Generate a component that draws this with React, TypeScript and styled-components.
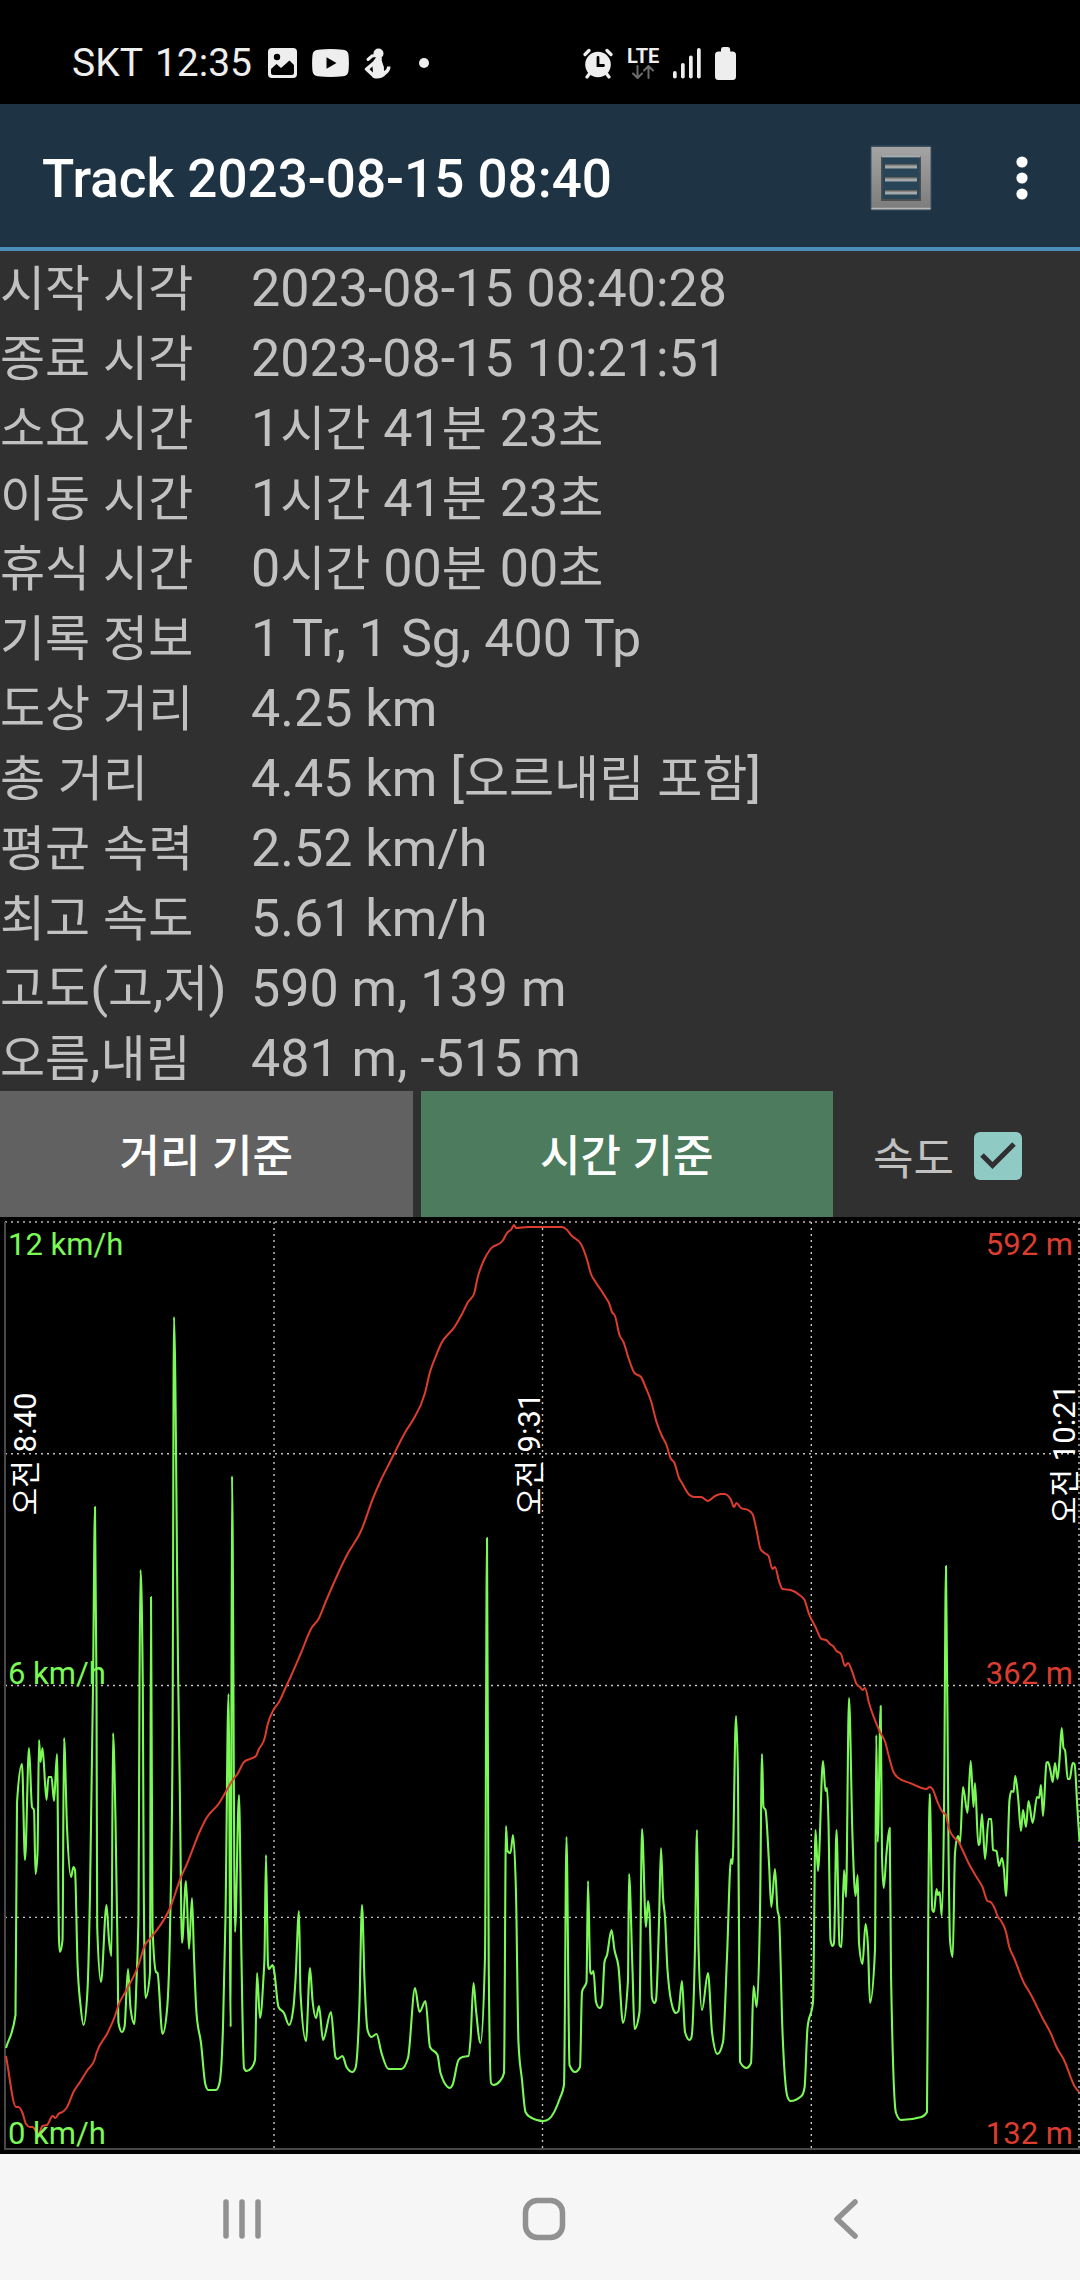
import React from "react";
import styled, { createGlobalStyle } from "styled-components";

const GlobalStyle = createGlobalStyle`
  *, *::before, *::after { box-sizing: border-box; }
  body {
    margin: 0;
    background: #303030;
    font-family: Roboto, "Noto Sans CJK KR", sans-serif;
  }
  h1, dl, dd, dt { margin: 0; font-weight: 400; }
  button { border: 0; padding: 0; font-family: inherit; cursor: pointer; }
  svg { display: block; }
`;

/* ---------- text with Latin and Hangul runs ---------- */

const HangulRun = styled.span<{ $size: number }>`
  font-family: "Noto Sans CJK KR", sans-serif;
  font-size: ${(p) => p.$size}px;
  line-height: 1;
`;

const TimeText = styled.text`
  fill: #fff;
  text-anchor: middle;
`;

const TimeRun = styled.tspan<{ $hangul: boolean }>`
  font-size: ${(p) => (p.$hangul ? 30 : 31)}px;
`;

const splitRuns = (text: string) => text.split(/([가-힣]+)/).filter(Boolean);
const isHangul = (run: string) => /[가-힣]/.test(run);

function Mixed({ text, size }: { text: string; size: number }) {
  return (
    <>
      {splitRuns(text).map((run, i) =>
        isHangul(run) ? (
          <HangulRun key={i} $size={size}>
            {run}
          </HangulRun>
        ) : (
          <React.Fragment key={i}>{run}</React.Fragment>
        )
      )}
    </>
  );
}

/* ---------- page parts ---------- */

const Page = styled.div`
  display: flex;
  flex-direction: column;
  min-height: 100vh;
  color: #c1c1c1;
`;

const StatusBar = styled.div`
  display: flex;
  align-items: center;
  height: 104px;
  padding: 22px 72px 0 72px;
  background: #000;
  color: #eee;
  font-size: 39px;
  line-height: 46px;
`;

const StatusGroup = styled.div<{ $gap: number; $before?: number }>`
  display: flex;
  align-items: center;
  gap: ${(p) => p.$gap}px;
  margin-left: ${(p) => p.$before ?? 0}px;
`;

const Network = styled.div`
  display: flex;
  flex-direction: column;
  align-items: center;
  font-size: 20px;
  font-weight: 700;
  line-height: 18px;
`;

const AppBar = styled.header`
  display: flex;
  align-items: center;
  height: 147px;
  padding: 4px 42px 0 42px;
  background: #1e3343;
  border-bottom: 4px solid #4a8fb9;
`;

const Title = styled.h1`
  flex: 1;
  padding-top: 3px;
  color: #fff;
  font-size: 53px;
  font-weight: 500;
  line-height: 62px;
`;

const Actions = styled.div`
  display: flex;
  gap: 55px;
`;

const IconButton = styled.button<{ $width: number }>`
  display: flex;
  align-items: center;
  justify-content: center;
  width: ${(p) => p.$width}px;
  height: 96px;
  background: transparent;
`;

const Stats = styled.dl`
  font-size: 52px;
`;

const StatRow = styled.div`
  display: flex;
  height: 70px;
  padding-top: 6px;
  line-height: 64px;
  white-space: nowrap;
`;

const StatName = styled.dt`
  flex: 0 0 251px;
`;

const StatValue = styled.dd`
  flex: 1;
`;

const Controls = styled.div`
  display: grid;
  grid-template-columns: 1fr 1fr 239px;
  gap: 8px;
  height: 126px;
`;

const ModeButton = styled.button<{ $active?: boolean }>`
  padding-top: 3px;
  background: ${(p) => (p.$active ? "#4c7b5d" : "#616161")};
  color: #fff;
  font-size: 47px;
  font-weight: 500;
`;

const SpeedToggle = styled.label`
  display: flex;
  align-items: center;
  gap: 20px;
  padding: 3px 0 0 32px;
  font-size: 47px;
  white-space: nowrap;
`;

const CheckStack = styled.span`
  display: grid;
  width: 48px;
  height: 48px;
  > * { grid-area: 1 / 1; }
  svg { pointer-events: none; }
`;

const CheckInput = styled.input`
  appearance: none;
  width: 48px;
  height: 48px;
  margin: 0;
  border: 5px solid #c1c1c1;
  border-radius: 6px;
  &:checked { border: 0; background: #90cac4; }
  & + svg { visibility: hidden; }
  &:checked + svg { visibility: visible; }
`;

const ChartPanel = styled.main`
  background: #000;
  svg { width: 100%; height: auto; }
  text { font-family: Roboto, "Noto Sans CJK KR", sans-serif; font-size: 31px; }
`;

const NavBar = styled.nav`
  display: flex;
  flex: 1;
  min-height: 126px;
  padding: 4px 83px 0 91px;
  background: #f6f6f6;
`;

const NavButton = styled.button`
  display: flex;
  flex: 1;
  align-items: center;
  justify-content: center;
  background: transparent;
`;

/* ---------- data ---------- */

const stats: [string, string][] = [
  ["시작 시각", "2023-08-15 08:40:28"],
  ["종료 시각", "2023-08-15 10:21:51"],
  ["소요 시간", "1시간 41분 23초"],
  ["이동 시간", "1시간 41분 23초"],
  ["휴식 시간", "0시간 00분 00초"],
  ["기록 정보", "1 Tr, 1 Sg, 400 Tp"],
  ["도상 거리", "4.25 km"],
  ["총 거리", "4.45 km [오르내림 포함]"],
  ["평균 속력", "2.52 km/h"],
  ["최고 속도", "5.61 km/h"],
  ["고도(고,저)", "590 m, 139 m"],
  ["오름,내림", "481 m, -515 m"],
];

const speedTrack = `6,831 15.5,798 17,586 22,547 25,643 29,531 32,590 34,593 35.5,657 37.5,636 39,523 40.5,545 42.5,531
46.5,583 48.5,560 51.5,560 54,584 57,537 59,723 60,735 62.5,723 64,521 67,610 71,660 73.5,650 75,653 77.5,746 80.5,788
83.5,808 87.5,773 90,676 93,470 95,290 96.5,470 97.2,710 101,765 106.5,688 109,723 111.5,739 113,516 115.5,603 117.5,730
118.5,806 122,815 124.5,810 128,752 130.5,791 134.5,807 136.5,763 138.5,696 139.5,470 140.5,353 142.8,470 143.7,663
145.5,781 150,756 151,380 152.5,710 156,755 157.5,756 162.5,817 167,793 170,713 172.5,530 174,100 178.3,470 179.7,563
182,726 186,664 189,732 192,681 194,740 196.5,796 201,826 205.5,868 208.5,873 216,873 219.5,866 223,810 225.5,700
228.5,477 230.7,810 232,259 235,715 239,578 241.5,743 244,851 246.5,854 251.5,851 255,843 257,756 260,801 263.5,760
264.5,740 266,638 268,748 269,752 272.5,748 274,753 278.5,790 284,796 289,808 293.5,790 295.5,763 299,694 300.5,776
306,824 310,751 312.5,783 316,801 319,789 323,823 331,795 335.5,840 337.5,842 342.5,839 346.5,850 352.5,855 355.5,851
359.5,786 362,688 364.5,763 367.5,813 371.5,820 376.5,817 381.5,836 388.5,852 395,852 401.5,852 408,841 415,771
419.5,795 425.5,784 430,830 437.5,838 440.5,856 450,871 452.5,868 458.5,843 462.5,840 468.5,839 470.5,823 473.5,766
476,793 480.5,826 485,740 487,321 488.7,746 491,866 493.5,868 500,864 504,856 506,609 507.5,634 510.5,636 513,618
516,676 518.5,826 522,863 525.5,895 530,900 543.5,904 549,902 560,881 564,868 566.5,620 569.5,848 575,855 580,850
582,775 586.5,765 588,664 590.3,755 591.3,757 593.5,754 596,785 599.5,791 602,788 604.5,745 607,738 611.5,713
614.5,733 618.5,750 623,806 628,763 629,657 632.5,753 634.5,812 639.5,795 642,612 646,710 648,684 649.5,696 652,781
654.5,786 656,783 659,706 661,631 663,680 665,700 667.5,753 673.5,793 676,796 678.5,794 682,764 685,815 689.5,823
691.5,820 695,730 697,613 698.5,730 702,793 708,756 712,815 717.5,837 723,825 727,740 731,642 732.5,647 736,499
738,563 740,845 746.5,851 751,846 753.5,769 756.7,790 760,696 762,537 763.5,590 765.5,593 769,646 771.3,690 775,652
777.5,693 779,700 782.5,815 787.5,880 790.5,884 801.5,879 804.5,871 807.5,811 813,785 815.5,613 818,654 823,544
825.5,574 827,571 828.5,606 830.5,723 832.5,729 834,726 836.5,613 839.5,728 841.5,730 844,653 846,680 849,481
852.5,620 855.5,679 857.7,658 859,726 862.5,747 865.5,707 868,730 870,786 875,733 876.3,518 877.7,625 880.7,489
882,640 883.7,671 886.5,636 889.7,611 891,756 896,896 901,903 921.5,900 927,895 928.3,696 929.7,577 932.3,693
934,695 936.5,672 938,678 939.7,675 941.7,699 944,596 946,349 948.5,630 950,723 952.7,740 955,636 958,619 960,626
963,570 967.5,596 970.7,544 973.5,590 975,566 978.3,628 979.5,627 982,597 985,642 988.7,602 991.3,602 993,633
996.5,634 999,649 1002,641 1004,653 1006,679 1009.5,583 1011.5,574 1013.5,575 1015.3,559 1018.3,583 1021,614
1023,593 1026,610 1028.5,584 1032.7,606 1037,580 1039,581 1041,568 1043,599 1046.5,546 1048,545 1050.5,554
1052.7,565 1055,546 1057.5,562 1059.7,540 1061.7,511 1063.5,531 1065,533 1067.7,562 1069.7,562 1072.7,546
1074.5,547 1077.5,593 1079.5,624`;

const altitudeTrack = `6,839 16,890 18.5,890 22.5,896 26,907 30,910 32.5,910 38.5,917 42.5,909 47,908 52.5,899 55.5,901 58.5,897
62.5,895 66.5,891 74,874 80,865 87.5,853 94.5,843 96.5,836 107.5,816 115,799 118.5,788 126.5,773 138.5,748 144.5,729
151.5,720 170.5,690 181,660 186.5,648 200,614 206.5,601 218.5,587 233.5,562 237.5,557 244,545 256,539 258.5,533 265,520
267.5,508 274,492 279,485 285,472 291.5,458 301,436 311.5,411 318.5,402 326,384 347.5,337 361,314 373.5,280 380,265
390,245 394,237 406.5,213 413,203 425,176 430,155 435.5,140 441.5,126 454.5,110 462,97 468,85 474,77 477.5,61 483.5,44
490.5,32 502.5,24 507,16 511.5,12 514,8 516,11 528,10 562,10 566,12 572,19 581,27 586.5,41 591,57 595.5,65 601,73
606,81 609,86 612,95 615,99 619.5,118 623.5,125 628.5,141 634.5,156 641,160 645.5,170 651,184 656.5,205 661.5,218
666.5,228 670.5,241 674.5,246 679,261 682,266 689.5,278 694.5,280 701,280 708,284 715,279 721,277 724.5,277 731,283
734,290 736.5,286 741,291 748,293 752.5,297 756.5,313 760.5,332 764.5,336 768.5,339 772.5,352 775,350 779,364 782.5,372
790.5,373 799.5,378 804.5,383 809,397 815.5,410 821.5,422 826,423 830,427 833,429 836.5,434 841,437 845,449 848,446
852,454 856.5,467 860,470 862.5,473 865,471 869,486 880,515 885.5,526 888.5,538 893.5,555 898.5,561 910,566 926.5,572
929.5,570 932.5,572 937.5,585 943.5,596 945.5,597 948.5,610 955.5,622 958,624 962.5,633 968.5,646 976.5,660 982.5,670
987.5,684 990.5,685 994.5,691 998,700 1000.5,703 1006,715 1009,729 1014.5,742 1024,766 1030,776 1042.5,801 1051.5,818
1056,829 1064,843 1075,870 1079,875`;

/* Monotone cubic path: keeps peaks at their samples and rounds flat runs. */
function monotonePath(track: string): string {
  const pts = track.trim().split(/\s+/).map((p) => p.split(",").map(Number));
  const n = pts.length;
  const slope = (i: number) => (pts[i + 1][1] - pts[i][1]) / (pts[i + 1][0] - pts[i][0]);
  const tangent = (i: number) => {
    if (i === 0) return slope(0);
    if (i === n - 1) return slope(n - 2);
    const a = slope(i - 1);
    const b = slope(i);
    if (a * b <= 0) return 0;
    const ha = pts[i][0] - pts[i - 1][0];
    const hb = pts[i + 1][0] - pts[i][0];
    const mean = (a * hb + b * ha) / (ha + hb);
    return Math.sign(mean) * Math.min(Math.abs(a), Math.abs(b), Math.abs(mean) / 2) * 2;
  };
  let d = `M${pts[0][0]} ${pts[0][1]}`;
  for (let i = 0; i < n - 1; i++) {
    const [x0, y0] = pts[i];
    const [x1, y1] = pts[i + 1];
    const h = (x1 - x0) / 3;
    d += `C${(x0 + h).toFixed(2)} ${(y0 + tangent(i) * h).toFixed(2)} ${(x1 - h).toFixed(2)} ${(y1 - tangent(i + 1) * h).toFixed(2)} ${x1} ${y1}`;
  }
  return d;
}

function TimeLabel({ x, text }: { x: number; text: string }) {
  return (
    <TimeText transform={`translate(${x} 237) rotate(-90)`}>
      {splitRuns(text).map((run, i) => (
        <TimeRun key={i} $hangul={isHangul(run)}>
          {run}
        </TimeRun>
      ))}
    </TimeText>
  );
}

function TrackChart({ showSpeed }: { showSpeed: boolean }) {
  const green = "#7bf956";
  const red = "#dc3d2e";
  return (
    <svg viewBox="0 0 1080 937" role="img" aria-label="속도와 고도">
      <g fill="none" strokeDasharray="2 4">
        <path d="M5 5H1080" stroke="#8a8a8a" strokeWidth="2" />
        <path d="M5 236.7H1080M5 468.5H1080M5 700.4H1080" stroke="#c4c4c4" strokeWidth="1.4" />
        <path d="M274 5V931M542.5 5V931M811.3 5V931" stroke="#c4c4c4" strokeWidth="1.4" />
        <path d="M1079 5V931" stroke="#8a8a8a" strokeWidth="2" />
      </g>
      <path d="M5 5V932H1080" fill="none" stroke="#484848" strokeWidth="2" />
      {showSpeed && (
        <path d={monotonePath(speedTrack)} fill="none" stroke={green} strokeWidth="2.1" strokeLinejoin="round" />
      )}
      <path d={monotonePath(altitudeTrack)} fill="none" stroke={red} strokeWidth="2" strokeLinejoin="round" />
      <g fill={green}>
        <text x="8" y="38">12 km/h</text>
        <text x="8" y="467">6 km/h</text>
        <text x="8" y="927">0 km/h</text>
      </g>
      <g fill={red} textAnchor="end">
        <text x="1073" y="38">592 m</text>
        <text x="1073" y="467">362 m</text>
        <text x="1073" y="927">132 m</text>
      </g>
      <TimeLabel x={36} text="오전 8:40" />
      <TimeLabel x={540} text="오전 9:31" />
      <TimeLabel x={1075} text="오전 10:21" />
    </svg>
  );
}

/* ---------- icons ---------- */

const PhotoIcon = () => (
  <svg width="29" height="30" viewBox="0 0 29 30">
    <rect width="29" height="30" rx="4" fill="#eee" />
    <circle cx="9" cy="9" r="3.2" fill="#000" />
    <path d="M3 21 8.500 16 13 20 21.500 12.500 26 17V24.500Q26 27 23.500 27H5.500Q3 27 3 24.500Z" fill="#000" />
  </svg>
);

const VideoIcon = () => (
  <svg width="37" height="28" viewBox="0 0 37 28">
    <path d="M6 .8Q18.500-.6 31 .8 36 1.200 36.500 6 37.300 14 36.500 22 36 26.800 31 27.200 18.500 28.600 6 27.200 1 26.800.5 22-.3 14 .5 6 1 1.200 6 .8Z" fill="#eee" />
    <path d="M14.500 8.200V19.800L24.500 14Z" fill="#000" />
  </svg>
);

const FigureIcon = () => (
  <svg width="27" height="31" viewBox="0 0 27 31">
    <circle cx="14.500" cy="5.500" r="5" fill="#eee" />
    <path d="M12 9.500H18Q17 12 18.500 15 20.500 19 20 23 23 21.500 23 18.500H26.500Q26.500 23 22 26.500 18.500 30.500 13 30.500 9 30.500 8 28.500L1 22Q.3 21 1 20.200L9 13.500Z" fill="#eee" />
    <path d="M4 11.500 8 8 12 7.500" fill="none" stroke="#eee" strokeWidth="3" strokeLinecap="round" />
    <path d="M5.500 21.300 8.500 18.500 9 24.500Z" fill="#000" />
  </svg>
);

const DotIcon = () => (
  <svg width="10" height="10" viewBox="0 0 10 10">
    <circle cx="5" cy="5" r="5" fill="#eee" />
  </svg>
);

const AlarmIcon = () => (
  <svg width="30" height="31" viewBox="0 0 30 31">
    <g stroke="#eee" strokeWidth="3.200" strokeLinecap="round">
      <path d="M2 6.500 6 2.500M28 6.500 24 2.500M7 25 4 29M23 25 26 29" />
    </g>
    <circle cx="15" cy="16.500" r="12.800" fill="#eee" />
    <path d="M15 9.500V17.500H20.500" fill="none" stroke="#000" strokeWidth="2.800" strokeLinecap="round" />
  </svg>
);

const DataArrows = () => (
  <svg width="22" height="14" viewBox="0 0 22 14" fill="none" stroke="#6c6c6c" strokeWidth="2" strokeLinecap="round" strokeLinejoin="round">
    <path d="M5.500 1V13M1 8.500 5.500 13 10 8.500M16.500 13V1M12 5.500 16.500 1 21 5.500" />
  </svg>
);

const SignalIcon = () => (
  <svg width="28" height="31" viewBox="0 0 28 31" fill="#eee">
    <rect x="0" y="23" width="3.700" height="7.500" rx="1.800" />
    <rect x="8" y="15" width="3.700" height="15.500" rx="1.800" />
    <rect x="16" y="7.500" width="3.700" height="23" rx="1.800" />
    <rect x="24" y="0" width="3.700" height="30.500" rx="1.800" />
  </svg>
);

const BatteryIcon = () => (
  <svg width="21" height="33" viewBox="0 0 21 33" fill="#eee">
    <path d="M6 2.500Q6 0 8 0H13Q15.200 0 15.200 2.500V4.500H17.500Q21 4.500 21 8V29.500Q21 33 17.500 33H3.500Q0 33 0 29.500V8Q0 4.500 3.500 4.500H6Z" />
  </svg>
);

const ListIcon = () => (
  <svg width="62" height="66" viewBox="0 0 62 66">
    <defs>
      <linearGradient id="frame" x1="0" y1="0" x2="0" y2="1">
        <stop offset="0" stopColor="#a4a4a4" />
        <stop offset="1" stopColor="#7c7c7c" />
      </linearGradient>
    </defs>
    <rect x="0.500" y="0.500" width="61" height="65" rx="2" fill="#3b5263" />
    <rect x="1.500" y="2" width="59" height="62.500" fill="url(#frame)" />
    <path d="M1.500 63.500H60.500" stroke="#b8b8b8" strokeWidth="1.500" />
    <rect x="11" y="11" width="40" height="45" fill="#4b4f52" />
    <rect x="12.500" y="13" width="37" height="41" fill="#284457" />
    <path d="M11.500 11.500H50.500" stroke="#9fb0b8" strokeWidth="1.500" />
    <path d="M15 20H47M15 33H47M15 46H47" stroke="#66625f" strokeWidth="2" />
    <path d="M15 22H47M15 35H47M15 48H47" stroke="#a3a8aa" strokeWidth="3" />
  </svg>
);

const MoreIcon = () => (
  <svg width="12" height="44" viewBox="0 0 12 44" fill="#fff">
    <circle cx="6" cy="6" r="5.600" />
    <circle cx="6" cy="22" r="5.600" />
    <circle cx="6" cy="38" r="5.600" />
  </svg>
);

const CheckMark = () => (
  <svg width="48" height="48" viewBox="0 0 48 48" fill="none" stroke="#303030" strokeWidth="5">
    <path d="M8 23 18.500 33.500 40 12" />
  </svg>
);

const NavIcon = ({ children }: { children: React.ReactNode }) => (
  <svg width="44" height="44" viewBox="0 0 44 44" fill="none" stroke="#919191" strokeWidth="5.500" strokeLinecap="round" strokeLinejoin="round">
    {children}
  </svg>
);

/* ---------- app ---------- */

export default function App() {
  const [mode, setMode] = React.useState<"distance" | "time">("time");
  const [showSpeed, setShowSpeed] = React.useState(true);

  return (
    <Page>
      <GlobalStyle />
      <StatusBar>
        <StatusGroup $gap={12}>
          <span>SKT</span>
          <span>12:35</span>
        </StatusGroup>
        <StatusGroup $gap={15} $before={16}>
          <PhotoIcon />
          <VideoIcon />
          <FigureIcon />
        </StatusGroup>
        <StatusGroup $gap={0} $before={28}>
          <DotIcon />
        </StatusGroup>
        <StatusGroup $gap={14} $before={154}>
          <AlarmIcon />
          <Network>
            LTE
            <DataArrows />
          </Network>
          <SignalIcon />
          <BatteryIcon />
        </StatusGroup>
      </StatusBar>

      <AppBar>
        <Title>Track 2023-08-15 08:40</Title>
        <Actions>
          <IconButton $width={100} aria-label="목록">
            <ListIcon />
          </IconButton>
          <IconButton $width={32} aria-label="더보기">
            <MoreIcon />
          </IconButton>
        </Actions>
      </AppBar>

      <Stats>
        {stats.map(([name, value]) => (
          <StatRow key={name}>
            <StatName>
              <Mixed text={name} size={49} />
            </StatName>
            <StatValue>
              <Mixed text={value} size={49} />
            </StatValue>
          </StatRow>
        ))}
      </Stats>

      <Controls>
        <ModeButton $active={mode === "distance"} onClick={() => setMode("distance")}>
          <Mixed text="거리 기준" size={44} />
        </ModeButton>
        <ModeButton $active={mode === "time"} onClick={() => setMode("time")}>
          <Mixed text="시간 기준" size={44} />
        </ModeButton>
        <SpeedToggle>
          <Mixed text="속도" size={44} />
          <CheckStack>
            <CheckInput type="checkbox" checked={showSpeed} onChange={(e) => setShowSpeed(e.target.checked)} />
            <CheckMark />
          </CheckStack>
        </SpeedToggle>
      </Controls>

      <ChartPanel>
        <TrackChart showSpeed={showSpeed} />
      </ChartPanel>

      <NavBar>
        <NavButton aria-label="최근 앱">
          <NavIcon>
            <path d="M6 5V39M22 5V39M38 5V39" />
          </NavIcon>
        </NavButton>
        <NavButton aria-label="홈">
          <NavIcon>
            <rect x="3.500" y="3.500" width="37" height="37" rx="12" />
          </NavIcon>
        </NavButton>
        <NavButton aria-label="뒤로">
          <NavIcon>
            <path d="M31 5 13 22 31 39" />
          </NavIcon>
        </NavButton>
      </NavBar>
    </Page>
  );
}
